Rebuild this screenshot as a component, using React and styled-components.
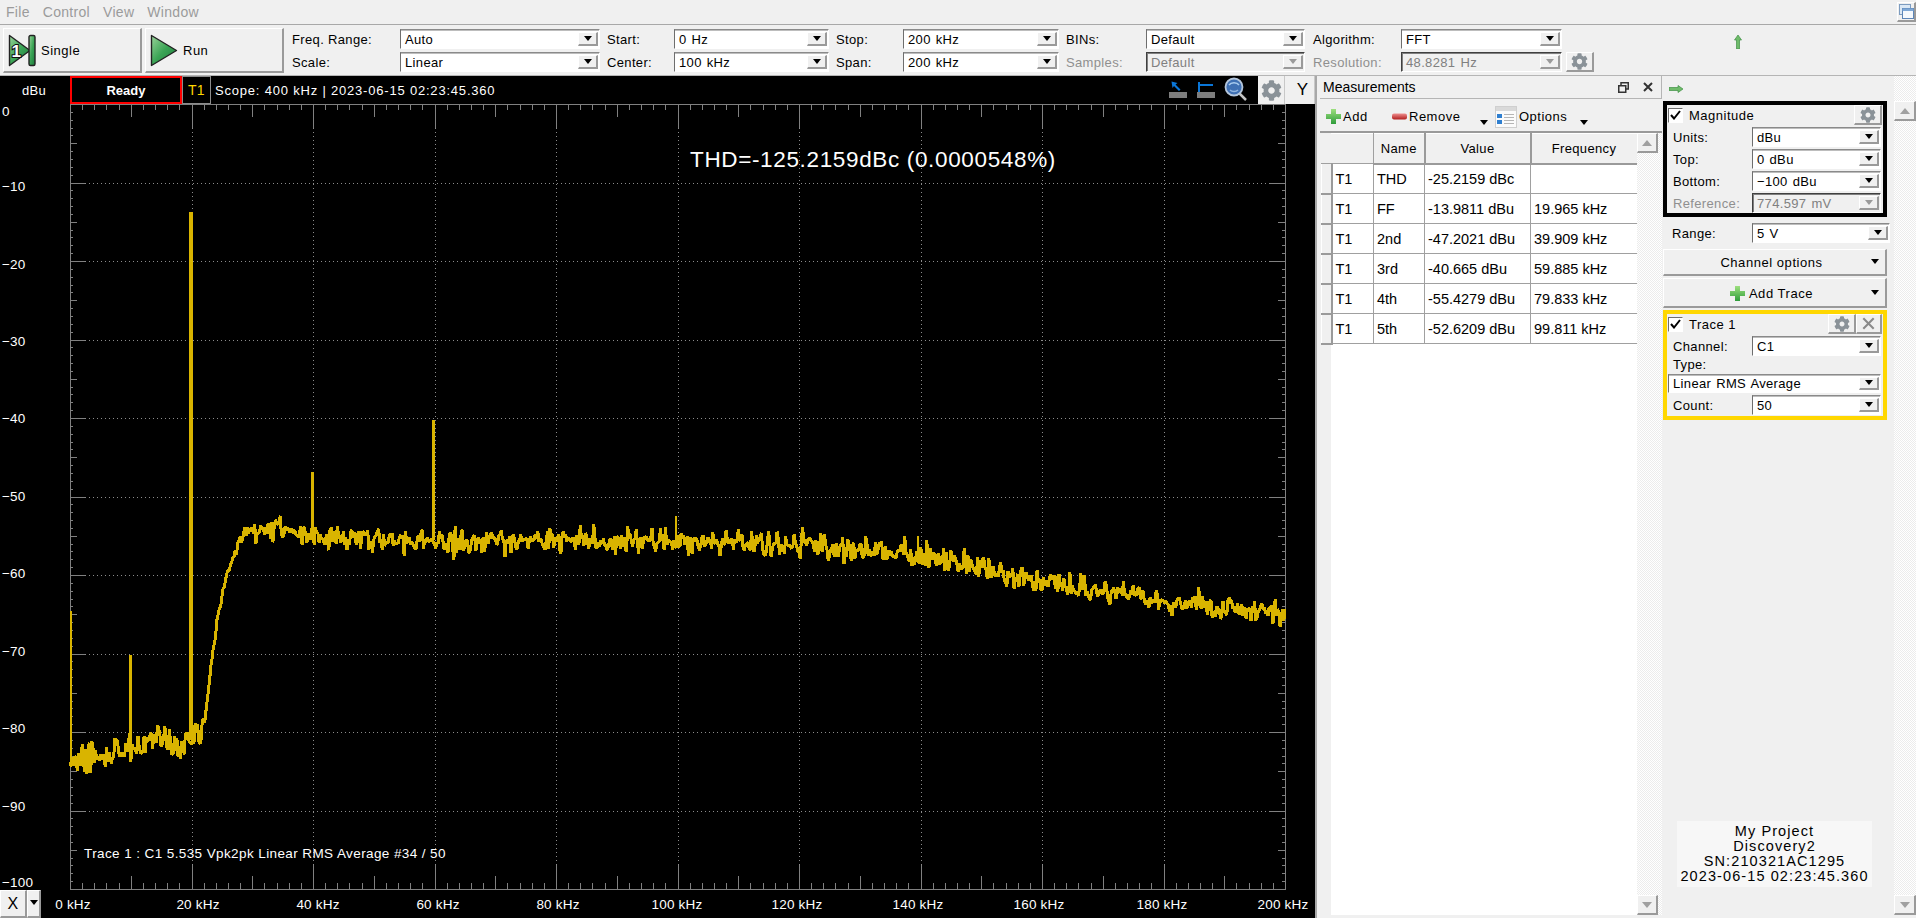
import React from 'react'
import styled, { createGlobalStyle, css } from 'styled-components'
import { FaCog } from 'react-icons/fa'

const GlobalStyle = createGlobalStyle`
  html, body { margin: 0; padding: 0; background: #f0f0f0; }
  body { font: 13px "Liberation Sans", Arial, sans-serif; color: #000; letter-spacing: .3px; }
  * { box-sizing: border-box; }
`

// chart geometry, in page pixels
const LEFT = 70
const RIGHT = 1285
const TOP = 104
const BOTTOM = 889
const KHZ = (RIGHT - LEFT) / 200
const DB = (BOTTOM - TOP) / 100
const xOf = khz => LEFT + khz * KHZ
const yOf = db => TOP - db * DB

const ANCHORS = [
  [0, -83.8], [5, -83], [10, -81.8], [15, -81], [19.5, -81.5], [21, -80.6], [22, -79.5], [22.5, -76.8],
  [23.3, -70.8], [24.1, -66.6], [25.5, -61], [26.9, -57.6], [28.5, -55], [31, -54.3], [36, -54],
  [40, -55], [50, -55.4], [60, -55.8], [80, -55.7], [100, -55.8], [120, -56.2], [130, -56.8],
  [140, -57.4], [150, -59], [160, -61], [170, -62], [180, -63.2], [190, -64.4], [200, -65.3],
]

const envelope = khz => {
  for (let i = 1; i < ANCHORS.length; i++) {
    const [x0, y0] = ANCHORS[i - 1]
    const [x1, y1] = ANCHORS[i]
    if (khz <= x1) return y0 + ((y1 - y0) * (khz - x0)) / (x1 - x0)
  }
  return ANCHORS[ANCHORS.length - 1][1]
}

const buildTrace = () => {
  let seed = 20230615
  const rand = () => {
    seed = (seed * 1664525 + 1013904223) >>> 0
    return seed / 4294967296
  }
  const points = []
  for (let i = 0; i <= 1000; i++) {
    const khz = i * 0.2
    const steep = khz > 22 && khz < 28
    const gauss = (rand() + rand() + rand() + rand() - 2) * 1.7
    const noise = gauss * (steep ? 0.35 : khz < 22 ? 1.05 : 0.8)
    points.push(`${(xOf(khz)).toFixed(1)},${yOf(envelope(khz) + noise).toFixed(1)}`)
  }
  return points.join(' ')
}

const SPIKES = [
  { x: 71, y: 611, base: 760, width: 2 },
  { x: 130, y: yOf(-70.2), base: yOf(-82), width: 3 },
  { x: 190.5, y: yOf(-13.7), base: yOf(-81), width: 4 },
  { x: 312, y: yOf(-46.9), base: yOf(-55), width: 3 },
  { x: 433.5, y: yOf(-40.3), base: yOf(-55.6), width: 3 },
  { x: 676, y: yOf(-52.5), base: yOf(-56), width: 2 },
  { x: 918, y: yOf(-55), base: yOf(-57.5), width: 2 },
]

const buildTicks = () => {
  let d = ''
  for (let i = 0; i <= 100; i++) {
    const x = Math.round(LEFT + i * 2 * KHZ) + 0.5
    const h = i % 10 === 0 ? 24 : i % 5 === 0 ? 13 : 6
    d += `M${x} ${TOP}v${h}M${x} ${BOTTOM}v${-h}`
    const y = Math.round(TOP + i * DB) + 0.5
    const w = i % 10 === 0 ? 15 : i % 5 === 0 ? 7 : 3
    d += `M${LEFT} ${y}h${w}M${RIGHT} ${y}h${-w}`
  }
  return d
}

const buildGrid = () => {
  let d = ''
  for (let i = 1; i < 10; i++) {
    const y = Math.round(TOP + i * 10 * DB) + 0.5
    d += `M${LEFT + 15} ${y}H${RIGHT - 15}`
    const x = Math.round(LEFT + i * 20 * KHZ) + 0.5
    d += `M${x} ${TOP + 24}V${BOTTOM - 24}`
  }
  return d
}

const TRACE = buildTrace()
const TICKS = buildTicks()
const GRID = buildGrid()

const Y_LABELS = [
  ['0', 112], ['−10', 187], ['−20', 265], ['−30', 342], ['−40', 419], ['−50', 497],
  ['−60', 574], ['−70', 652], ['−80', 729], ['−90', 807], ['−100', 883],
]
const X_LABELS = [
  ['0 kHz', 73], ['20 kHz', 198], ['40 kHz', 318], ['60 kHz', 438], ['80 kHz', 558], ['100 kHz', 677],
  ['120 kHz', 797], ['140 kHz', 918], ['160 kHz', 1039], ['180 kHz', 1162], ['200 kHz', 1283],
]

const raised = css`
  background: #f0f0f0;
  border-style: solid;
  border-width: 1px 2px 2px 1px;
  border-color: #fff #9a9a9a #9a9a9a #fff;
`

const Page = styled.div`
  width: 1916px;
  height: 918px;
  display: flex;
  flex-direction: column;
  overflow: hidden;
  background: #f0f0f0;
`

const MenuBar = styled.div`
  height: 25px;
  flex: none;
  display: flex;
  align-items: center;
  gap: 13px;
  padding: 0 0 1px 6px;
  font-size: 14px;
  color: #9b9b9b;
  border-bottom: 1px solid #a8a8a8;
`

const WindowButton = styled.div`
  ${raised}
  margin-left: auto;
  width: 19px;
  height: 20px;
  display: flex;
  align-items: center;
  justify-content: center;
`

const Toolbar = styled.div`
  height: 51px;
  flex: none;
  display: flex;
  align-items: flex-start;
  padding-top: 3px;
  padding-left: 3px;
  border-bottom: 1px solid #b5b5b5;
`

const RunButton = styled.button`
  ${raised}
  width: 139px;
  height: 45px;
  margin-right: 3px;
  padding: 0 0 0 ${p => p.$pad}px;
  display: flex;
  align-items: center;
  gap: 5px;
  font: inherit;
  letter-spacing: .5px;
`

const ControlGroup = styled.div`
  display: grid;
  grid-template-columns: ${p => p.$label}px ${p => p.$select}px ${p => (p.$extra ? '32px' : '')};
  grid-auto-rows: 20px;
  row-gap: 3px;
  margin-top: 1px;
  margin-left: ${p => p.$left || 7}px;
  align-items: center;
`

const Label = styled.span`
  color: ${p => (p.$off ? '#8f8f8f' : '#000')};
  white-space: nowrap;
  letter-spacing: .35px;
`

const SelectBox = styled.div`
  position: relative;
  height: ${p => p.$h || 20}px;
  width: ${p => (p.$w ? `${p.$w}px` : '100%')};
  flex: none;
  display: flex;
  align-items: center;
  padding-left: 4px;
  white-space: nowrap;
  word-spacing: 1px;
  background: ${p => (p.$off ? '#f0f0f0' : '#fff')};
  color: ${p => (p.$off ? '#808080' : '#000')};
  border-style: solid;
  border-width: 1px;
  border-color: ${p => (p.$off ? '#404040 #fff #fff #404040' : '#8a8a8a #fff #fff #6e6e6e')};
  letter-spacing: .35px;
  box-shadow: ${p => (p.$off ? 'inset 1px 1px #808080' : 'inset 0 1px #bdbdbd')};
`

const DropButton = styled.span`
  ${raised}
  position: absolute;
  right: 1px;
  top: 2px;
  bottom: 2px;
  width: 20px;
  display: flex;
  align-items: center;
  justify-content: center;
`

const Caret = styled.span`
  display: block;
  width: 0;
  height: 0;
  flex: none;
  border-left: 4.5px solid transparent;
  border-right: 4.5px solid transparent;
  border-top: 5px solid ${p => p.$color || '#000'};
`

const Select = ({ value, off, w, h }) => (
  <SelectBox $off={off} $w={w} $h={h}>
    {value}
    <DropButton>
      <Caret $color={off ? '#9a9a9a' : '#000'} />
    </DropButton>
  </SelectBox>
)

const GearButton = styled.div`
  ${raised}
  width: ${p => p.$w || 28}px;
  height: ${p => p.$h || 20}px;
  margin-left: ${p => p.$left || 0}px;
  margin-right: ${p => p.$right || 0}px;
  flex: none;
  display: flex;
  align-items: center;
  justify-content: center;
  color: #8a9298;
`

const UpArrow = styled.div`
  margin: 7px 0 0 137px;
  line-height: 0;
`

const Main = styled.div`
  flex: 1;
  min-height: 0;
  display: flex;
`

const PlotPane = styled.div`
  width: 1315px;
  flex: none;
  position: relative;
  background: #000;
  color: #fff;
`

const PlotHeader = styled.div`
  height: 28px;
  display: flex;
  align-items: stretch;
`

const UnitLabel = styled.div`
  width: 70px;
  padding-right: 2px;
  display: flex;
  align-items: center;
  justify-content: center;
`

const ReadyBox = styled.div`
  width: 112px;
  height: 28px;
  border: 2px solid #f00;
  display: flex;
  align-items: center;
  justify-content: center;
  font-weight: 700;
  font-size: 13px;
  letter-spacing: 0;
`

const TraceTag = styled.div`
  width: 29px;
  border: 1px solid #8c8c8c;
  display: flex;
  align-items: center;
  justify-content: center;
  color: #ffd700;
  font-size: 14px;
`

const ScopeText = styled.div`
  margin-left: 4px;
  display: flex;
  align-items: center;
  letter-spacing: .8px;
  white-space: nowrap;
`

const PlotTools = styled.div`
  margin-left: auto;
  display: flex;
  align-items: stretch;
`

const PlotIcon = styled.div`
  width: ${p => p.$w}px;
  padding-right: ${p => p.$gap || 0}px;
  display: flex;
  align-items: center;
  justify-content: center;
`

const PlotButton = styled.div`
  width: ${p => p.$w}px;
  padding-left: ${p => p.$pad || 0}px;
  background: #f0f0f0;
  border-right: 1px solid #c8c8c8;
  display: flex;
  align-items: center;
  justify-content: center;
  color: #000;
  font-size: 17px;
`

const ChartSvg = styled.svg`
  display: block;
  width: 1315px;
  height: 814px;
`

const AxisText = styled.text`
  font: 13.5px "Liberation Sans", Arial, sans-serif;
  letter-spacing: .2px;
  fill: #fff;
`

const CaptionText = styled(AxisText)`
  letter-spacing: .4px;
`

const ThdText = styled.text`
  font: 22.5px "Liberation Sans", Arial, sans-serif;
  letter-spacing: .65px;
  fill: #fff;
`

const AxisPicker = styled.div`
  position: absolute;
  left: 0;
  bottom: 0;
  display: flex;
  color: #000;
  height: 28px;
`

const AxisButton = styled.div`
  ${raised}
  width: ${p => p.$w}px;
  display: flex;
  align-items: ${p => (p.$top ? 'flex-start' : 'center')};
  padding-top: ${p => (p.$top ? 9 : 0)}px;
  justify-content: center;
  font-size: 16px;
`

const Splitter = styled.div`
  width: 5px;
  flex: none;
  background: #f0f0f0;
  border-left: 2px solid #a8a8a8;
`

const MeasurePane = styled.div`
  width: 342px;
  flex: none;
  display: flex;
  flex-direction: column;
  padding-bottom: 3px;
`

const PaneTitle = styled.div`
  height: 23px;
  flex: none;
  display: flex;
  align-items: center;
  padding-left: 3px;
  font-size: 14px;
  letter-spacing: 0;
  border-bottom: 1px solid #b5b5b5;
  border-right: 1px solid #b5b5b5;
`

const TitleIcons = styled.div`
  margin-left: auto;
  display: flex;
  align-items: center;
  gap: 14px;
  padding-right: 8px;
`

const MeasureTools = styled.div`
  height: 34px;
  flex: none;
  display: flex;
  align-items: center;
  padding: 3px 0 0 6px;
  border-bottom: 2px solid #9a9a9a;
`

const ToolItem = styled.div`
  width: ${p => p.$w}px;
  flex: none;
  display: flex;
  align-items: center;
  gap: 2px;
  letter-spacing: .5px;
`

const ToolCaret = styled.div`
  width: ${p => p.$w}px;
  flex: none;
  padding-top: 11px;
  padding-left: 1px;
  display: flex;
`

const TableArea = styled.div`
  flex: 1;
  min-height: 0;
  display: flex;
`

const TableWell = styled.div`
  width: 317px;
  flex: none;
  background: linear-gradient(to right, #f0f0f0 11px, #fff 11px);
`

const GridTable = styled.table`
  width: 316px;
  margin-left: 1px;
  table-layout: fixed;
  border-collapse: collapse;
  font-size: 14.5px;
  letter-spacing: 0;
`

const HeadCell = styled.th`
  ${raised}
  height: 30px;
  padding: 0;
  font-weight: 400;
  font-size: 13px;
  letter-spacing: .35px;
`

const CornerCell = styled.th`
  background: #f0f0f0;
  border-right: 1px solid #a0a0a0;
  border-bottom: 1px solid #a0a0a0;
  padding: 0;
`

const StubCell = styled.td`
  ${raised}
  padding: 0;
`

const Cell = styled.td`
  height: 30px;
  padding: 0 0 0 3px;
  background: #fff;
  border-right: 1px solid #a0a0a0;
  border-bottom: 1px solid #a0a0a0;
  white-space: nowrap;
`

const ScrollTrack = styled.div`
  width: ${p => p.$w}px;
  flex: none;
  display: flex;
  flex-direction: column;
  justify-content: space-between;
  padding-top: ${p => p.$top}px;
  background: repeating-conic-gradient(#fff 0 25%, #ececec 0 50%) 0 0 / 2px 2px;
`

const ScrollButton = styled.div`
  ${raised}
  width: ${p => p.$w}px;
  height: 20px;
  display: flex;
  align-items: center;
  justify-content: center;
`

const UpCaret = styled.span`
  display: block;
  width: 0;
  height: 0;
  border-left: 5px solid transparent;
  border-right: 5px solid transparent;
  border-bottom: 6px solid #a0a0a0;
`

const DownCaret = styled(UpCaret)`
  border-bottom: 0;
  border-top: 6px solid #a0a0a0;
`

const SidePane = styled.div`
  flex: 1;
  min-width: 0;
  display: flex;
  padding-bottom: 3px;
`

const SideColumn = styled.div`
  width: 232px;
  flex: none;
  display: flex;
  flex-direction: column;
  padding-left: 1px;
`

const SideArrow = styled.div`
  height: 25px;
  flex: none;
  padding-left: 6px;
  display: flex;
  align-items: center;
`

const GroupBox = styled.div`
  width: 224px;
  height: ${p => p.$h}px;
  margin-top: ${p => p.$mt || 0}px;
  flex: none;
  border: 4px solid ${p => p.$color};
  display: flex;
  flex-direction: column;
  gap: 2px;
`

const GroupHead = styled.div`
  height: 20px;
  flex: none;
  display: flex;
  align-items: center;
  padding: 0 1px 0 1px;
  gap: 6px;
`

const CheckBox = styled.div`
  width: 15px;
  height: 15px;
  flex: none;
  background: #fff;
  border: 1px solid;
  border-color: #6e6e6e #fff #fff #6e6e6e;
  display: flex;
  align-items: center;
  justify-content: center;
`

const GroupTitle = styled.span`
  flex: 1;
  letter-spacing: .5px;
`

const FieldRow = styled.div`
  display: flex;
  align-items: center;
  flex: none;
  margin-top: ${p => p.$mt || 0}px;
  padding-left: ${p => p.$pad || 0}px;
  height: ${p => p.$h || 20}px;
`

const FieldLabel = styled(Label)`
  width: ${p => p.$w || 85}px;
  flex: none;
  padding-left: ${p => (p.$pad === undefined ? 6 : p.$pad)}px;
`

const TextButton = styled.div`
  ${raised}
  position: relative;
  width: 224px;
  height: ${p => p.$h}px;
  margin-top: ${p => p.$mt}px;
  flex: none;
  display: flex;
  align-items: center;
  justify-content: center;
  gap: 4px;
  padding: 1px 6px 0 0;
  letter-spacing: .55px;
`

const ButtonCaret = styled.span`
  position: absolute;
  right: 6px;
  top: 50%;
  margin-top: -3px;
  display: block;
`

const DeviceInfo = styled.div`
  width: 195px;
  margin: auto 0 28px 14px;
  padding: 3px 0;
  background: #f7f7f7;
  text-align: center;
  line-height: 15px;
  font-size: 14.5px;
  letter-spacing: 1.1px;
  white-space: nowrap;
`

const PlusIcon = ({ size = 15 }) => (
  <svg width={size} height={size} viewBox="0 0 15 15">
    <defs>
      <linearGradient id="plusFill" x1="0" y1="0" x2="0" y2="1">
        <stop offset="0" stopColor="#9ee07f" />
        <stop offset="1" stopColor="#2e9c3a" />
      </linearGradient>
    </defs>
    <path d="M5 0h5v5h5v5h-5v5H5v-5H0V5h5z" fill="url(#plusFill)" />
  </svg>
)

const MinusIcon = () => (
  <svg width="15" height="7" viewBox="0 0 15 7">
    <defs>
      <linearGradient id="minusFill" x1="0" y1="0" x2="0" y2="1">
        <stop offset="0" stopColor="#ef8f8f" />
        <stop offset="1" stopColor="#b21e1e" />
      </linearGradient>
    </defs>
    <rect width="15" height="6" y="0.5" rx="2" fill="url(#minusFill)" />
  </svg>
)

const OptionsIcon = () => (
  <svg width="22" height="22" viewBox="0 0 22 22">
    <rect x="0.5" y="0.5" width="21" height="21" fill="#fbfbfb" stroke="#cfcfcf" />
    <rect x="1" y="1" width="20" height="4" fill="#d9d9d9" />
    <rect x="2" y="8" width="5" height="4" fill="#2f7fd0" />
    <rect x="2" y="14" width="5" height="4" fill="#2f7fd0" />
    <path d="M9 8.5h10M9 11.5h10M9 14.5h10M9 17.5h10" stroke="#b5b5b5" />
  </svg>
)

const GreenArrow = ({ rotate = 0 }) => (
  <svg width="14" height="14" viewBox="0 0 14 14" style={{ transform: `rotate(${rotate}deg)` }}>
    <path d="M7 0l3.500 5H8.500v9h-3V5H3.500z" fill="#6fbb6a" stroke="#3f8f45" strokeWidth="0.7" />
  </svg>
)

const SingleIcon = () => (
  <svg width="28" height="33" viewBox="0 0 28 33">
    <defs>
      <linearGradient id="runFill" x1="0" y1="0" x2="1" y2="1">
        <stop offset="0" stopColor="#9ad39a" />
        <stop offset="0.5" stopColor="#3aa455" />
        <stop offset="1" stopColor="#1d7a3c" />
      </linearGradient>
    </defs>
    <path d="M1.500 1.500L22 16.500L1.500 31.500z" fill="url(#runFill)" stroke="#222" strokeWidth="1.4" strokeLinejoin="round" />
    <rect x="21" y="1.500" width="6" height="30" rx="1.500" fill="url(#runFill)" stroke="#222" strokeWidth="1.4" />
    <text x="8.500" y="23" fontFamily="Liberation Sans, sans-serif" fontWeight="700" fontSize="17" fill="#fff" stroke="#111" strokeWidth="2" paintOrder="stroke" textAnchor="middle">1</text>
  </svg>
)

const RunIcon = () => (
  <svg width="28" height="33" viewBox="0 0 28 33">
    <defs>
      <linearGradient id="playFill" x1="0" y1="0" x2="1" y2="1">
        <stop offset="0" stopColor="#9ad39a" />
        <stop offset="0.5" stopColor="#3aa455" />
        <stop offset="1" stopColor="#1d7a3c" />
      </linearGradient>
    </defs>
    <path d="M1.500 1.500L26.500 16.500L1.500 31.500z" fill="url(#playFill)" stroke="#222" strokeWidth="1.4" strokeLinejoin="round" />
  </svg>
)

const CheckMark = () => (
  <svg width="11" height="10" viewBox="0 0 11 10">
    <path d="M1 5l3 3.500L10 1" fill="none" stroke="#000" strokeWidth="2" />
  </svg>
)

const CursorArrowIcon = () => (
  <svg width="18" height="18" viewBox="0 0 18 18">
    <rect x="0" y="11" width="18" height="6" fill="#7d7d7d" />
    <path d="M2.500 0.500l6 1.500-2 1.500 5 5-1.500 1.500-5-5-1.500 2z" fill="#0a76d8" />
  </svg>
)

const CursorTeeIcon = () => (
  <svg width="18" height="18" viewBox="0 0 18 18">
    <rect x="0" y="11" width="18" height="6" fill="#7d7d7d" />
    <path d="M2 1v10M2 4h14" fill="none" stroke="#0a76d8" strokeWidth="2" />
  </svg>
)

const MagnifierIcon = () => (
  <svg width="24" height="26" viewBox="0 0 24 26">
    <path d="M15 16l7 7" stroke="#c4c4c4" strokeWidth="2.500" />
    <circle cx="10" cy="10" r="8.500" fill="#3f70b4" stroke="#b4c6dc" strokeWidth="1.800" />
    <path d="M5 8c2-3 8-3 10 0" fill="none" stroke="#a8cbef" strokeWidth="1.500" />
    <path d="M6 13c2 2 6 2 8 0" fill="none" stroke="#8fb4df" strokeWidth="1.500" />
  </svg>
)

const CascadeIcon = () => (
  <svg width="15" height="15" viewBox="0 0 15 15">
    <rect x="0.500" y="0.500" width="11" height="10" fill="#dbe8f5" stroke="#7d9cc0" />
    <rect x="3.500" y="4.500" width="11" height="10" fill="#f5f9fd" stroke="#5d86b8" />
    <rect x="3.500" y="4.500" width="11" height="2.500" fill="#7fa8d6" />
  </svg>
)

const RestoreIcon = () => (
  <svg width="11" height="11" viewBox="0 0 11 11">
    <path d="M3 3V.75h7.250V7H8" fill="none" stroke="#333" strokeWidth="1.500" />
    <rect x="0.750" y="3.750" width="7" height="6.500" fill="none" stroke="#333" strokeWidth="1.500" />
  </svg>
)

const CloseIcon = ({ size = 10, color = '#333', weight = 2 }) => (
  <svg width={size} height={size} viewBox="0 0 10 10">
    <path d="M1 1l8 8M9 1l-8 8" fill="none" stroke={color} strokeWidth={weight} />
  </svg>
)

const MEASUREMENTS = [
  ['THD', '-25.2159 dBc', ''],
  ['FF', '-13.9811 dBu', '19.965 kHz'],
  ['2nd', '-47.2021 dBu', '39.909 kHz'],
  ['3rd', '-40.665 dBu', '59.885 kHz'],
  ['4th', '-55.4279 dBu', '79.833 kHz'],
  ['5th', '-52.6209 dBu', '99.811 kHz'],
]

const SpectrumChart = () => (
  <ChartSvg viewBox={`0 ${TOP} 1315 814`}>
    <path d={GRID} fill="none" stroke="#8c8c8c" strokeDasharray="1 3" shapeRendering="crispEdges" />
    <path d={TICKS} fill="none" stroke="#808080" shapeRendering="crispEdges" />
    <rect x={LEFT + 0.5} y={TOP + 0.5} width={RIGHT - LEFT} height={BOTTOM - TOP} fill="none" stroke="#808080" shapeRendering="crispEdges" />
    <polyline points={TRACE} fill="none" stroke="#d9b400" strokeWidth="3" strokeLinejoin="bevel" shapeRendering="crispEdges" />
    {SPIKES.map(s => (
      <line key={s.x} x1={s.x} x2={s.x} y1={s.y} y2={s.base} stroke="#d9b400" strokeWidth={s.width} shapeRendering="crispEdges" />
    ))}
    {Y_LABELS.map(([text, y]) => (
      <AxisText key={text} x="2" y={y} dominantBaseline="middle">{text}</AxisText>
    ))}
    {X_LABELS.map(([text, x]) => (
      <AxisText key={text} x={x} y="905" textAnchor="middle" dominantBaseline="middle">{text}</AxisText>
    ))}
    <CaptionText x="84" y="854" dominantBaseline="middle">Trace 1 : C1  5.535 Vpk2pk Linear RMS Average #34 / 50</CaptionText>
    <ThdText x="690" y="167">THD=-125.2159dBc (0.0000548%)</ThdText>
  </ChartSvg>
)

const App = () => (
  <Page>
    <GlobalStyle />
    <MenuBar>
      <span>File</span>
      <span>Control</span>
      <span>View</span>
      <span>Window</span>
      <WindowButton><CascadeIcon /></WindowButton>
    </MenuBar>

    <Toolbar>
      <RunButton $pad={4}><SingleIcon />Single</RunButton>
      <RunButton $pad={4}><RunIcon />Run</RunButton>
      <ControlGroup $label={108} $select={200} $left={5}>
        <Label>Freq. Range:</Label><Select value="Auto" />
        <Label>Scale:</Label><Select value="Linear" />
      </ControlGroup>
      <ControlGroup $label={67} $select={155}>
        <Label>Start:</Label><Select value="0 Hz" />
        <Label>Center:</Label><Select value="100 kHz" />
      </ControlGroup>
      <ControlGroup $label={67} $select={156}>
        <Label>Stop:</Label><Select value="200 kHz" />
        <Label>Span:</Label><Select value="200 kHz" />
      </ControlGroup>
      <ControlGroup $label={80} $select={159}>
        <Label>BINs:</Label><Select value="Default" />
        <Label $off>Samples:</Label><Select value="Default" off />
      </ControlGroup>
      <ControlGroup $label={88} $select={161} $left={8} $extra>
        <Label>Algorithm:</Label><Select value="FFT" /><span />
        <Label $off>Resolution:</Label><Select value="48.8281 Hz" off />
        <GearButton $left={4}><FaCog size={17} /></GearButton>
      </ControlGroup>
      <UpArrow><GreenArrow /></UpArrow>
    </Toolbar>

    <Main>
      <PlotPane>
        <PlotHeader>
          <UnitLabel>dBu</UnitLabel>
          <ReadyBox>Ready</ReadyBox>
          <TraceTag>T1</TraceTag>
          <ScopeText>Scope: 400 kHz | 2023-06-15 02:23:45.360</ScopeText>
          <PlotTools>
            <PlotIcon $w={28}><CursorArrowIcon /></PlotIcon>
            <PlotIcon $w={28}><CursorTeeIcon /></PlotIcon>
            <PlotIcon $w={38} $gap={6}><MagnifierIcon /></PlotIcon>
            <PlotButton $w={27}><FaCog size={21} color="#8a9298" /></PlotButton>
            <PlotButton $w={30} $pad={6}>Y</PlotButton>
          </PlotTools>
        </PlotHeader>
        <SpectrumChart />
        <AxisPicker>
          <AxisButton $w={27}>X</AxisButton>
          <AxisButton $w={14} $top><Caret /></AxisButton>
        </AxisPicker>
      </PlotPane>

      <Splitter />

      <MeasurePane>
        <PaneTitle>
          Measurements
          <TitleIcons>
            <RestoreIcon />
            <CloseIcon />
          </TitleIcons>
        </PaneTitle>
        <MeasureTools>
          <ToolItem $w={66}><PlusIcon />Add</ToolItem>
          <ToolItem $w={87}><MinusIcon />Remove</ToolItem>
          <ToolCaret $w={16}><Caret /></ToolCaret>
          <ToolItem $w={84}><OptionsIcon />Options</ToolItem>
          <ToolCaret $w={16}><Caret /></ToolCaret>
        </MeasureTools>
        <TableArea>
          <TableWell>
            <GridTable>
              <colgroup>
                <col width="10" />
                <col width="42" />
                <col width="51" />
                <col width="106" />
                <col width="107" />
              </colgroup>
              <thead>
                <tr>
                  <CornerCell colSpan={2} />
                  <HeadCell>Name</HeadCell>
                  <HeadCell>Value</HeadCell>
                  <HeadCell>Frequency</HeadCell>
                </tr>
              </thead>
              <tbody>
                {MEASUREMENTS.map(([name, value, freq]) => (
                  <tr key={name}>
                    <StubCell />
                    <Cell>T1</Cell>
                    <Cell>{name}</Cell>
                    <Cell>{value}</Cell>
                    <Cell>{freq}</Cell>
                  </tr>
                ))}
              </tbody>
            </GridTable>
          </TableWell>
          <ScrollTrack $w={25} $top={0}>
            <ScrollButton $w={21}><UpCaret /></ScrollButton>
            <ScrollButton $w={21}><DownCaret /></ScrollButton>
          </ScrollTrack>
        </TableArea>
      </MeasurePane>

      <SidePane>
        <SideColumn>
          <SideArrow><GreenArrow rotate={90} /></SideArrow>

          <GroupBox $color="#000" $h={116}>
            <GroupHead>
              <CheckBox><CheckMark /></CheckBox>
              <GroupTitle>Magnitude</GroupTitle>
              <GearButton><FaCog size={16} /></GearButton>
            </GroupHead>
            <FieldRow><FieldLabel>Units:</FieldLabel><Select value="dBu" w={129} /></FieldRow>
            <FieldRow><FieldLabel>Top:</FieldLabel><Select value="0 dBu" w={129} /></FieldRow>
            <FieldRow><FieldLabel>Bottom:</FieldLabel><Select value="−100 dBu" w={129} /></FieldRow>
            <FieldRow><FieldLabel $off>Reference:</FieldLabel><Select value="774.597 mV" w={129} off /></FieldRow>
          </GroupBox>

          <FieldRow $mt={6}><FieldLabel $pad={9} $w={89}>Range:</FieldLabel><Select value="5 V" w={138} /></FieldRow>

          <TextButton $h={27} $mt={6}>
            Channel options
            <ButtonCaret><Caret /></ButtonCaret>
          </TextButton>
          <TextButton $h={30} $mt={2}>
            <PlusIcon />Add Trace
            <ButtonCaret><Caret /></ButtonCaret>
          </TextButton>

          <GroupBox $color="#ffd700" $h={110} $mt={2}>
            <GroupHead>
              <CheckBox><CheckMark /></CheckBox>
              <GroupTitle>Trace 1</GroupTitle>
              <GearButton $right={-6}><FaCog size={16} /></GearButton>
              <GearButton $w={26}><CloseIcon size={13} color="#8a8a8a" weight={1.6} /></GearButton>
            </GroupHead>
            <FieldRow><FieldLabel>Channel:</FieldLabel><Select value="C1" w={129} /></FieldRow>
            <FieldRow $h={13}><FieldLabel>Type:</FieldLabel></FieldRow>
            <FieldRow $pad={1}><Select value="Linear RMS Average" w={213} h={19} /></FieldRow>
            <FieldRow><FieldLabel>Count:</FieldLabel><Select value="50" w={129} /></FieldRow>
          </GroupBox>

          <DeviceInfo>
            My Project<br />
            Discovery2<br />
            SN:210321AC1295<br />
            2023-06-15 02:23:45.360
          </DeviceInfo>
        </SideColumn>
        <ScrollTrack $w={22} $top={25}>
          <ScrollButton $w={22}><UpCaret /></ScrollButton>
          <ScrollButton $w={22}><DownCaret /></ScrollButton>
        </ScrollTrack>
      </SidePane>
    </Main>
  </Page>
)

export default App
